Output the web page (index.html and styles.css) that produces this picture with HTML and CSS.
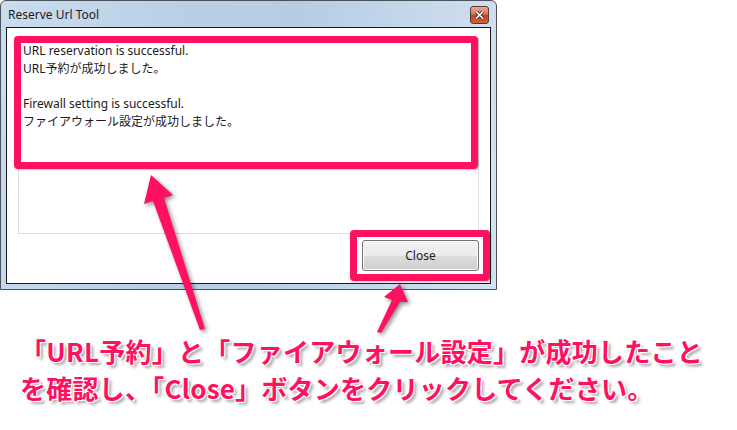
FILE: index.html
```html
<!DOCTYPE html>
<html lang="ja">
<head>
    <meta charset="UTF-8">
    <title>Reserve Url Tool</title>
    <link rel="stylesheet" href="styles.css">
</head>
<body>
    <div class="stage">
        <div class="window">
            <div class="titlebar">
                <span class="title">Reserve Url Tool</span>
                <span class="close-x">
                    <svg width="9" height="8" viewBox="0 0 9 8">
                        <path d="M1 0.5 L8 7.5 M8 0.5 L1 7.5" stroke="#3a2a2a" stroke-width="3.2"/>
                        <path d="M1 0.5 L8 7.5 M8 0.5 L1 7.5" stroke="#fff" stroke-width="1.6"/>
                    </svg>
                </span>
            </div>
            <div class="client">
                <div class="textbox">
                    <p>URL reservation is successful.</p>
                    <p>URL予約が成功しました。</p>
                    <p class="blank"></p>
                    <p>Firewall setting is successful.</p>
                    <p>ファイアウォール設定が成功しました。</p>
                </div>
                <div class="actions">
                    <button class="btn">Close</button>
                </div>
            </div>
        </div>

        <p class="caption">「URL予約」と「ファイアウォール設定」が成功したこと<br>を確認し、「Close」ボタンをクリックしてください。</p>

        <!-- 注釈の枠と矢印 -->
        <div class="mark mark-text"></div>
        <div class="mark mark-button"></div>
        <svg class="arrows" width="737" height="430" viewBox="0 0 737 430">
            <polygon points="151,175 173,195 164,198 205,329 200,330 153,201 144,204"/>
            <polygon points="400,284 408,302 400,302 381,333 377,332 392,300 384,297"/>
        </svg>
    </div>
</body>
</html>
```

FILE: styles.css
```css
* {
    margin: 0;
    padding: 0;
    box-sizing: border-box;
}
body {
    background-color: #fff;
    font-family: 'Noto Sans', 'Noto Sans CJK JP', sans-serif;
}
.stage {
    position: relative;
    width: 737px;
    height: 430px;
    overflow: hidden;
}
.window {
    width: 497px;
    height: 290px;
    border: 1px solid #4a525c;
    border-radius: 6px 6px 0 0;
    padding: 0 5px 5px 5px;
    background: linear-gradient(100deg, #cbdcee 0%, #b9cfe5 35%, #b7cde4 55%, #d4e3f2 100%);
    display: flex;
    flex-direction: column;
}
.titlebar {
    height: 26px;
    display: flex;
    align-items: center;
    justify-content: space-between;
    padding: 0 2px 0 2px;
}
.title {
    font-size: 12px;
    color: #1b1b1b;
}
.close-x {
    width: 19px;
    height: 18px;
    margin-top: 1px;
    border: 1px solid #5b3a30;
    border-radius: 3px;
    background: linear-gradient(#eaa993 0%, #d6745a 45%, #c4421f 52%, #d2603a 100%);
    display: flex;
    align-items: center;
    justify-content: center;
}
.client {
    flex: 1;
    background-color: #fff;
    border: 1px solid #1a1a1a;
    display: flex;
    flex-direction: column;
}
.textbox {
    height: 196px;
    margin: 10px 11px 0 11px;
    border: 1px solid #dedede;
    padding: 3px 4px;
    font-size: 12px;
    color: #1a1a1a;
}
.textbox p {
    line-height: 18px;
}
.textbox p.blank {
    height: 17px;
}
.actions {
    display: flex;
    justify-content: flex-end;
    padding: 6px 11px 0 0;
}
.btn {
    width: 117px;
    height: 31px;
    border: 1px solid #707070;
    border-radius: 3px;
    background: linear-gradient(#f2f2f2 0%, #ebebeb 50%, #dddddd 52%, #cfcfcf 100%);
    box-shadow: inset 0 0 0 1px #fcfcfc;
    font-family: 'Noto Sans', sans-serif;
    font-size: 12px;
    color: #1b1b1b;
}
.caption {
    margin-top: 42px;
    padding-left: 20px;
    font-family: 'Noto Sans CJK JP', sans-serif;
    font-weight: 700;
    font-size: 26px;
    line-height: 37px;
    letter-spacing: 0.25px;
    color: #ff1060;
    white-space: nowrap;
    text-shadow: 1px 1px 0 #fff, -1px -1px 0 #fff, 1px -1px 0 #fff, -1px 1px 0 #fff,
        3px 3px 3px rgba(0, 0, 0, 0.35);
}
.mark {
    position: absolute;
    border: 7px solid #ff1060;
    border-radius: 4px;
    box-shadow: 1px 1px 2px rgba(0, 0, 0, 0.25);
}
.mark-text {
    left: 14px;
    top: 36px;
    width: 464px;
    height: 133px;
}
.mark-button {
    left: 350px;
    top: 230px;
    width: 140px;
    height: 51px;
}
.arrows {
    position: absolute;
    left: 0;
    top: 0;
    fill: #ff1060;
    filter: drop-shadow(2px 2px 2px rgba(0, 0, 0, 0.45));
}
```
